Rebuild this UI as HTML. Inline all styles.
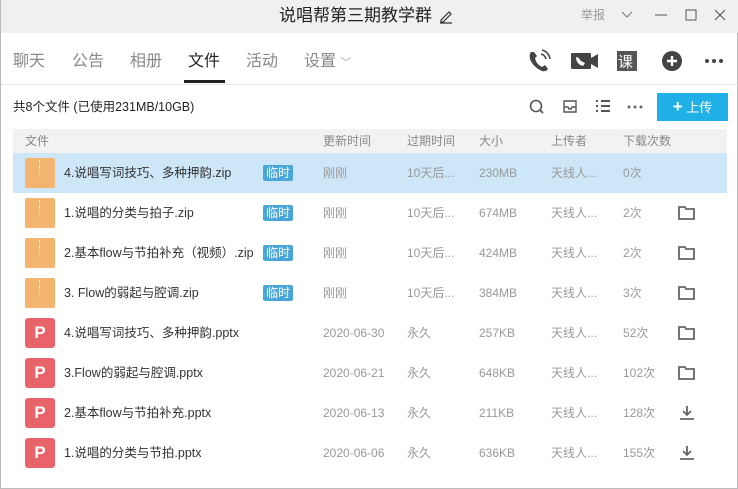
<!DOCTYPE html>
<html><head><meta charset="utf-8"><style>
*{margin:0;padding:0;box-sizing:border-box}
body{width:738px;height:489px;overflow:hidden;background:#fff;font-family:"Liberation Sans","Noto Sans CJK SC",sans-serif;position:relative;color:#333;border-left:1px solid #bbb;border-right:1px solid #bbb;border-bottom:1px solid #bbb}
.a{position:absolute;white-space:nowrap;line-height:1.2}
.title{left:0;top:0;width:738px;height:33px;background:#f0f0f0}
.tab{top:51px;font-size:16px;color:#888;line-height:22px}
.row{position:absolute;left:12px;width:714px;height:40px}
.c{position:absolute;top:12px;font-size:12px;color:#999;line-height:16px;height:16px;white-space:nowrap}
.nm{left:51px;color:#333;font-size:12.5px}
.zip{position:absolute;left:12px;top:5px;width:30px;height:30px;background:#f2b46e;border-radius:2px}
.zip:after{content:"";position:absolute;left:14px;top:2px;width:2px;height:14px;border-left:1px dotted #fff}
.ppt{position:absolute;left:12px;top:5px;width:30px;height:30px;background:#e8646a;border-radius:3px;color:#fff;font-weight:bold;font-size:17px;text-align:center;line-height:30px}
.tag{position:absolute;left:250px;top:12px;background:#4aa6d9;color:#fff;font-size:12px;padding:0 3px;line-height:16px;height:16px;border-radius:2px}
.ic{position:absolute;left:665px;top:12px}
</style></head><body>
<div class="a title"></div>
<div class="a" style="left:278px;top:5px;font-size:17px;line-height:22px;color:#222">说唱帮第三期教学群</div>
<svg class="a" style="left:437px;top:8px" width="16" height="16"><path d="M3 12 L11 4 L13 6 L5 14 L3 14Z M2 15H14" stroke="#333" fill="none" stroke-width="1.2"/></svg>
<div class="a" style="left:580px;top:7px;font-size:12px;line-height:16px;color:#999">举报</div>
<svg class="a" style="left:620px;top:8px" width="110" height="14"><path d="M1 4 L6 9 L11 4" stroke="#777" fill="none"/><path d="M34 7H46" stroke="#555"/><rect x="65" y="2" width="10" height="10" stroke="#555" fill="none"/><path d="M94 2 L104 12 M104 2 L94 12" stroke="#555"/></svg>
<div class="a tab" style="left:12px">聊天</div>
<div class="a tab" style="left:71px">公告</div>
<div class="a tab" style="left:129px">相册</div>
<div class="a tab" style="left:187px;color:#222">文件</div>
<div class="a" style="left:183px;top:80px;width:41px;height:3px;background:#222"></div>
<div class="a tab" style="left:245px">活动</div>
<div class="a tab" style="left:303px">设置 <span style="font-size:11px;color:#aaa">﹀</span></div>
<svg class="a" style="left:526px;top:48px" width="200" height="26">
<path d="M4 4 Q2 6 3 11 Q6 19 15 23 Q19 24 21 21 L18 17 L15 19 Q9 16 8 10 L10 8 L7 4Z" fill="#444"/>
<path d="M14 6 Q18 7 19 11 M15 2 Q22 4 23 11" stroke="#444" fill="none" stroke-width="1.6"/>
<rect x="44" y="5" width="20" height="16" fill="#444" rx="1"/><path d="M64 10 L71 6 V20 L64 16Z" fill="#444"/>
<path d="M49 9 Q49 16 56 18 L58 15 L56 14 Q53 13 52 10Z" fill="#fff"/>
<rect x="90" y="3" width="20" height="20" fill="#555"/><text x="91" y="19" font-size="15" fill="#fff" font-family="Noto Sans CJK SC">课</text>
<circle cx="145" cy="13" r="10" fill="#444"/><path d="M145 8V18 M140 13H150" stroke="#fff" stroke-width="2.4"/>
<circle cx="180" cy="13" r="2" fill="#444"/><circle cx="187" cy="13" r="2" fill="#444"/><circle cx="194" cy="13" r="2" fill="#444"/>
</svg>
<div class="a" style="left:0;top:84px;width:738px;height:1px;background:#e6e6e6"></div>
<div class="a" style="left:12px;top:99px;font-size:12.5px;line-height:16px;color:#222">共8个文件 (已使用231MB/10GB)</div>
<svg class="a" style="left:526px;top:97px" width="120" height="20">
<circle cx="9" cy="9" r="5.5" stroke="#555" fill="none" stroke-width="1.6"/><path d="M13 13 L16 16" stroke="#555" stroke-width="1.8"/>
<path d="M37 4 H49 V15 H37Z M37 10 H41 L42 12 H44 L45 10 H49" stroke="#555" fill="none" stroke-width="1.4"/>
<path d="M69 4h2M69 9h2M69 14h2M74 4h9M74 9h9M74 14h9" stroke="#555" stroke-width="2"/>
<circle cx="102" cy="10" r="1.5" fill="#666"/><circle cx="108" cy="10" r="1.5" fill="#666"/><circle cx="114" cy="10" r="1.5" fill="#666"/>
</svg>
<div class="a" style="left:656px;top:93px;width:71px;height:28px;background:#1fb0e8;color:#fff;font-size:13px;line-height:28px;text-align:center"><b style="font-size:17px">+</b> 上传</div>
<div class="row" style="top:129px;height:24px;background:#f2f2f2">
<div class="c" style="top:4px;left:12px;color:#888">文件</div><div class="c" style="top:4px;left:310px;color:#888">更新时间</div><div class="c" style="top:4px;left:394px;color:#888">过期时间</div><div class="c" style="top:4px;left:466px;color:#888">大小</div><div class="c" style="top:4px;left:538px;color:#888">上传者</div><div class="c" style="top:4px;left:610px;color:#888">下载次数</div></div>

<div class="row" style="top:153px;background:#cde6f8"><div class="zip"></div><div class="c nm">4.说唱写词技巧、多种押韵.zip</div><div class="tag">临时</div><div class="c" style="left:310px">刚刚</div><div class="c" style="left:394px">10天后...</div><div class="c" style="left:466px">230MB</div><div class="c" style="left:538px">天线人...</div><div class="c" style="left:610px">0次</div></div>

<div class="row" style="top:193px"><div class="zip"></div><div class="c nm">1.说唱的分类与拍子.zip</div><div class="tag">临时</div><div class="c" style="left:310px">刚刚</div><div class="c" style="left:394px">10天后...</div><div class="c" style="left:466px">674MB</div><div class="c" style="left:538px">天线人...</div><div class="c" style="left:610px">2次</div><svg class="ic" width="18" height="16"><path d="M1 2H7L8 4H16V14H1Z" stroke="#666" fill="none" stroke-width="1.8"/></svg></div>

<div class="row" style="top:233px"><div class="zip"></div><div class="c nm">2.基本flow与节拍补充（视频）.zip</div><div class="tag">临时</div><div class="c" style="left:310px">刚刚</div><div class="c" style="left:394px">10天后...</div><div class="c" style="left:466px">424MB</div><div class="c" style="left:538px">天线人...</div><div class="c" style="left:610px">2次</div><svg class="ic" width="18" height="16"><path d="M1 2H7L8 4H16V14H1Z" stroke="#666" fill="none" stroke-width="1.8"/></svg></div>

<div class="row" style="top:273px"><div class="zip"></div><div class="c nm">3. Flow的弱起与腔调.zip</div><div class="tag">临时</div><div class="c" style="left:310px">刚刚</div><div class="c" style="left:394px">10天后...</div><div class="c" style="left:466px">384MB</div><div class="c" style="left:538px">天线人...</div><div class="c" style="left:610px">3次</div><svg class="ic" width="18" height="16"><path d="M1 2H7L8 4H16V14H1Z" stroke="#666" fill="none" stroke-width="1.8"/></svg></div>

<div class="row" style="top:313px"><div class="ppt">P</div><div class="c nm">4.说唱写词技巧、多种押韵.pptx</div><div class="c" style="left:310px">2020-06-30</div><div class="c" style="left:394px">永久</div><div class="c" style="left:466px">257KB</div><div class="c" style="left:538px">天线人...</div><div class="c" style="left:610px">52次</div><svg class="ic" width="18" height="16"><path d="M1 2H7L8 4H16V14H1Z" stroke="#666" fill="none" stroke-width="1.8"/></svg></div>

<div class="row" style="top:353px"><div class="ppt">P</div><div class="c nm">3.Flow的弱起与腔调.pptx</div><div class="c" style="left:310px">2020-06-21</div><div class="c" style="left:394px">永久</div><div class="c" style="left:466px">648KB</div><div class="c" style="left:538px">天线人...</div><div class="c" style="left:610px">102次</div><svg class="ic" width="18" height="16"><path d="M1 2H7L8 4H16V14H1Z" stroke="#666" fill="none" stroke-width="1.8"/></svg></div>

<div class="row" style="top:393px"><div class="ppt">P</div><div class="c nm">2.基本flow与节拍补充.pptx</div><div class="c" style="left:310px">2020-06-13</div><div class="c" style="left:394px">永久</div><div class="c" style="left:466px">211KB</div><div class="c" style="left:538px">天线人...</div><div class="c" style="left:610px">128次</div><svg class="ic" width="18" height="16"><path d="M9 1V10 M5 6L9 10L13 6 M2 14H16" stroke="#666" fill="none" stroke-width="1.8"/></svg></div>

<div class="row" style="top:433px"><div class="ppt">P</div><div class="c nm">1.说唱的分类与节拍.pptx</div><div class="c" style="left:310px">2020-06-06</div><div class="c" style="left:394px">永久</div><div class="c" style="left:466px">636KB</div><div class="c" style="left:538px">天线人...</div><div class="c" style="left:610px">155次</div><svg class="ic" width="18" height="16"><path d="M9 1V10 M5 6L9 10L13 6 M2 14H16" stroke="#666" fill="none" stroke-width="1.8"/></svg></div>
</body></html>
